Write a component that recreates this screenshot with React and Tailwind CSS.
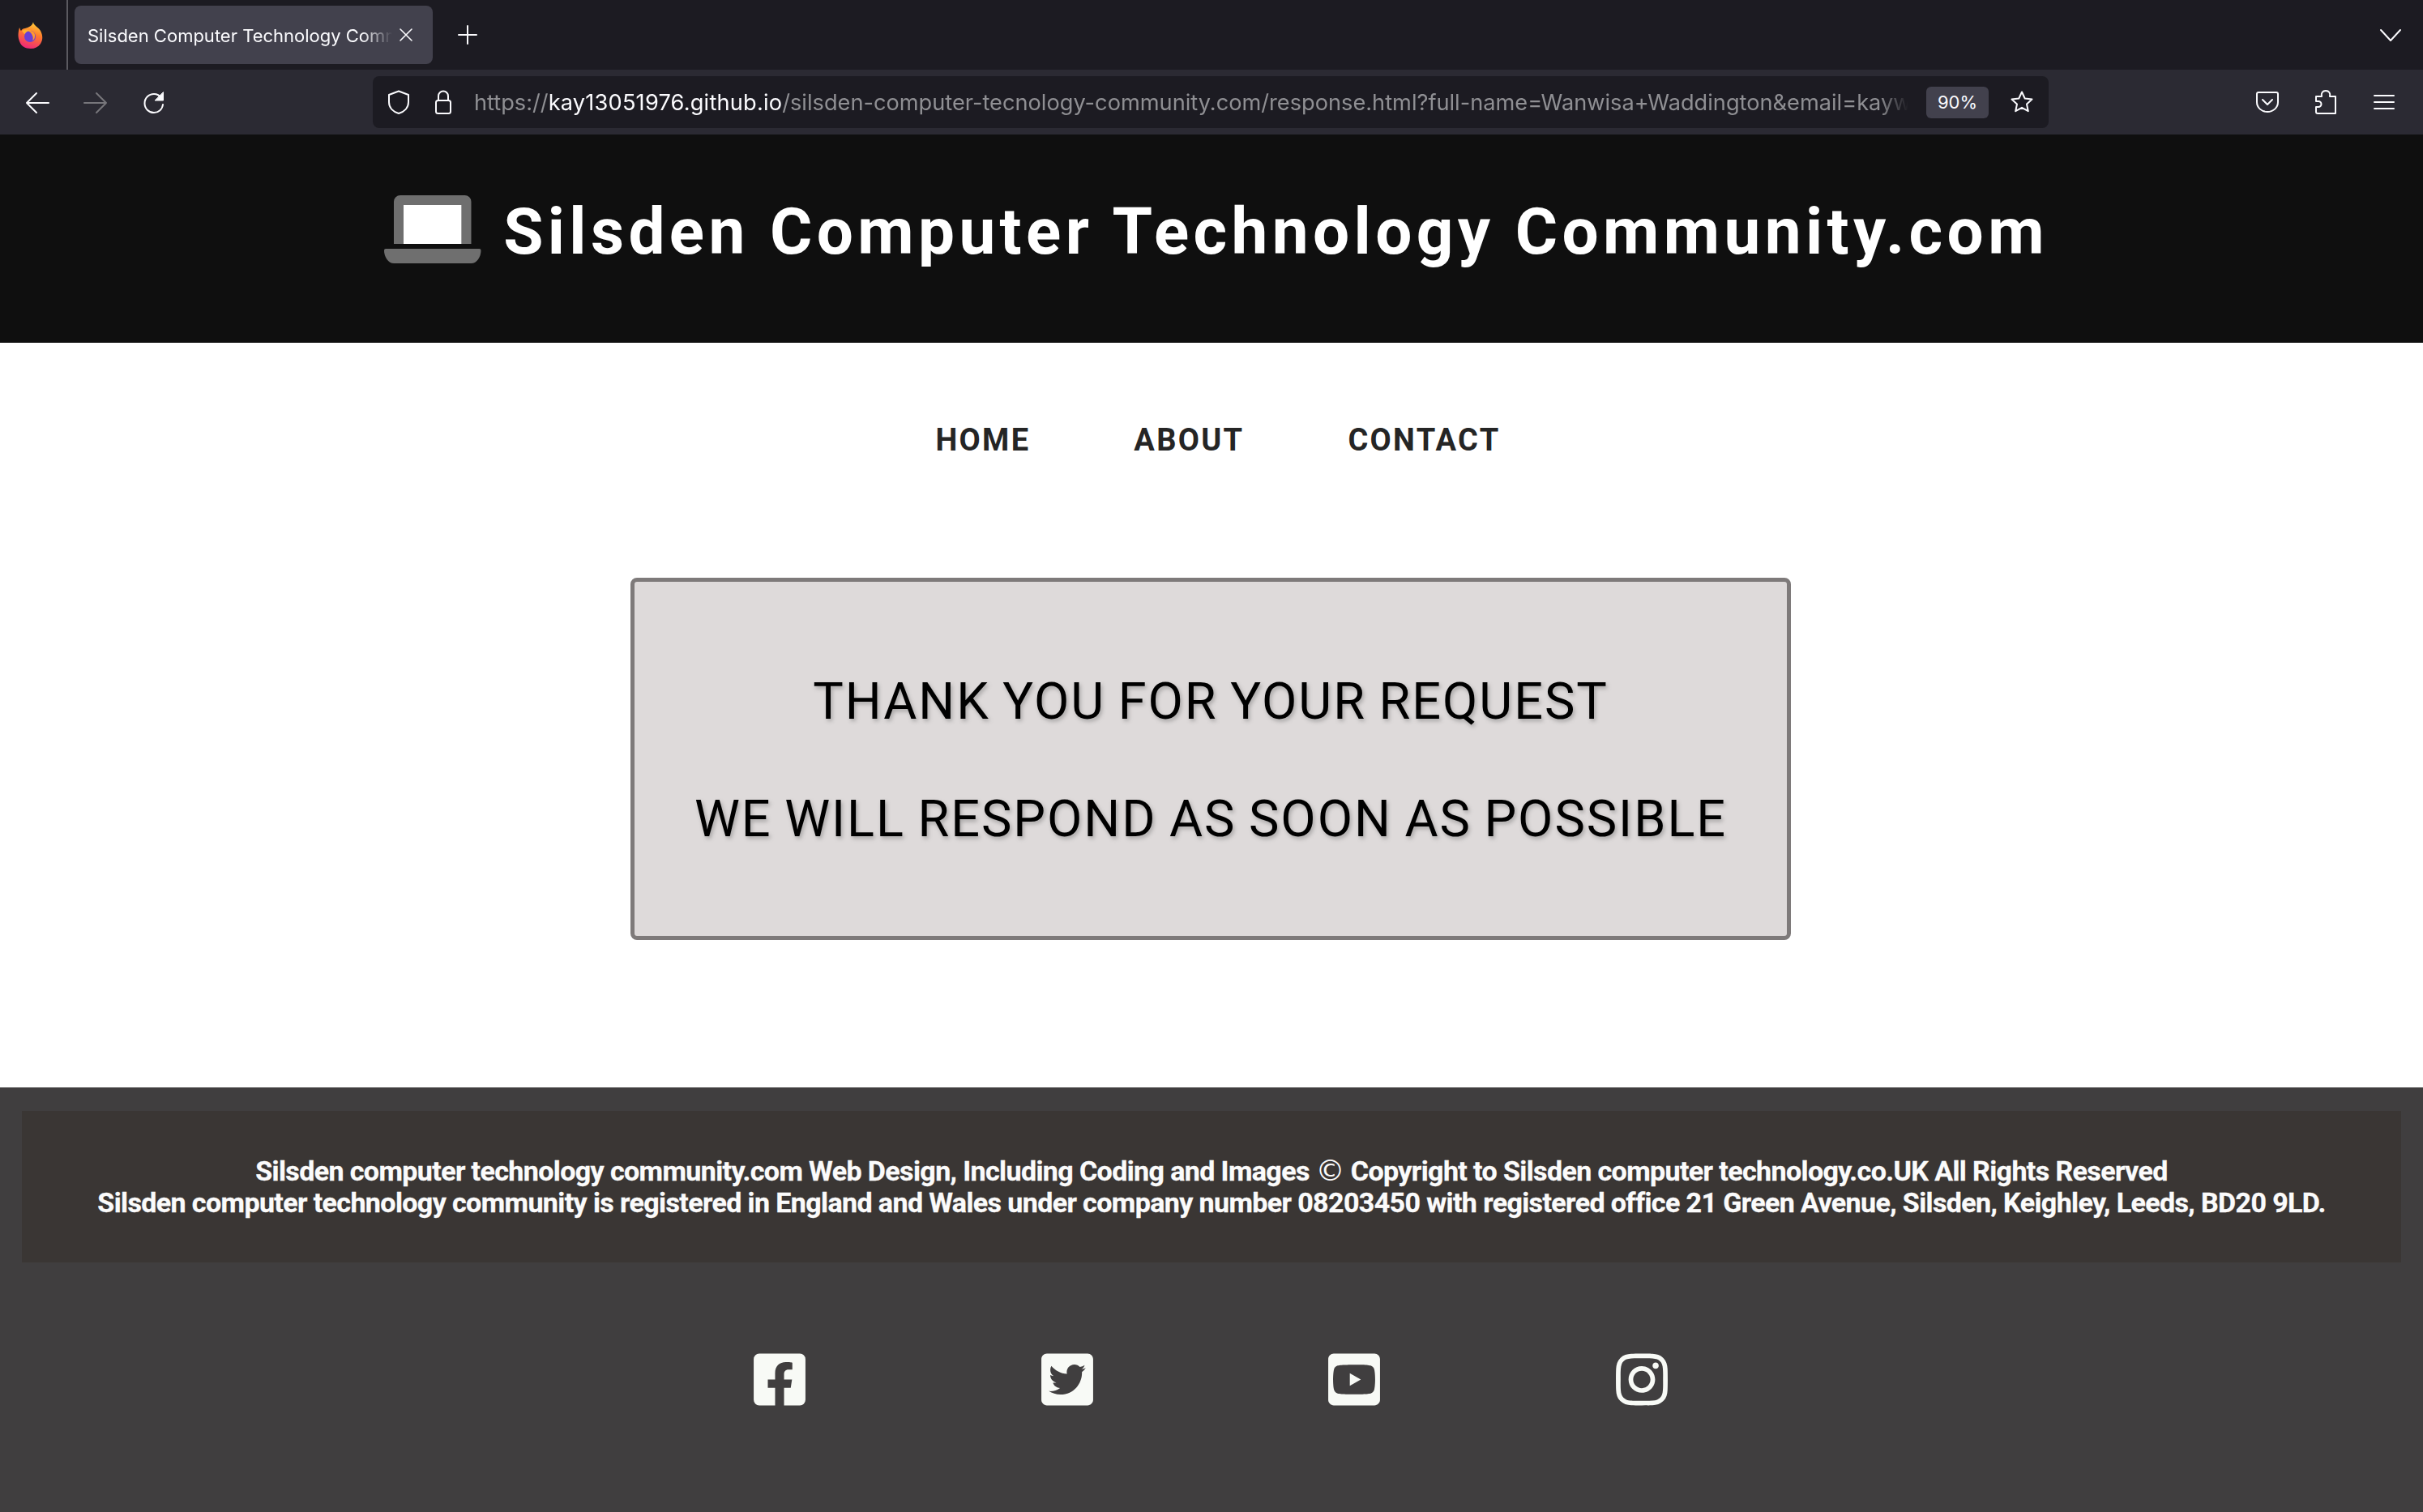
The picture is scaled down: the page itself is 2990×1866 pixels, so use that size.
import { FaFacebookSquare, FaTwitterSquare, FaYoutubeSquare, FaInstagram } from 'react-icons/fa'

const roboto = "font-['Roboto',sans-serif]"
const inter = "font-['Inter',sans-serif]"

function FirefoxLogo() {
  return (
    <svg width="31" height="33" viewBox="0 0 31 33">
      <defs>
        <linearGradient id="ffA" x1="0.7" y1="0" x2="0.4" y2="1">
          <stop offset="0" stopColor="#ffd43a" />
          <stop offset="0.45" stopColor="#ff7a2b" />
          <stop offset="1" stopColor="#f0267a" />
        </linearGradient>
      </defs>
      <path d="M19 0c0 4 6 6 9 11 3 6 3 11 0 16-3 4-7 6-12 6-7 0-12-3-14-9C0 19 0 14 2 7c1 2 1 3 2 4 1-2 3-3 5-3 4-1 9-3 10-8z" fill="url(#ffA)" />
      <path d="M5 11c3-2 8-2 11 0l-2 3-6 1z" fill="#ffb02e" />
      <circle cx="15" cy="18" r="7" fill="#6b3fd4" />
      <path d="M12 11c5-1 10 2 9 7 0 2-1 4-3 5 1-2 1-4 0-6-1-3-3-5-6-6z" fill="#ff9a2e" />
    </svg>
  )
}

function ChromeIcon({ children, dim, size = 32 }) {
  return (
    <svg
      width={size}
      height={size}
      viewBox="0 0 32 32"
      fill="none"
      stroke="currentColor"
      strokeWidth="2"
      strokeLinecap="round"
      strokeLinejoin="round"
      className={dim ? 'text-[#77767b] shrink-0' : 'text-[#fbfbfe] shrink-0'}
    >
      {children}
    </svg>
  )
}

function TabBar() {
  return (
    <div className="h-[86px] bg-[#1c1b22] flex items-center">
      <div className="w-[84px] h-full flex items-center justify-center pr-[8px] border-r-2 border-[#5b5a60]">
        <FirefoxLogo />
      </div>
      <div className="ml-[8px] w-[442px] h-[72px] bg-[#42414d] rounded-lg flex items-center pl-4 pr-[24px]">
        <span className={`${inter} flex-1 pt-[2px] overflow-hidden whitespace-nowrap text-[22px] text-[#fbfbfe] [mask-image:linear-gradient(to_right,black_90%,transparent)]`}>
          Silsden Computer Technology Community.com
        </span>
        <svg width="18" height="18" viewBox="0 0 18 18" className="ml-2 shrink-0 text-[#fbfbfe]" stroke="currentColor" strokeWidth="1.6" strokeLinecap="round">
          <path d="M2 2l14 14M16 2L2 16" />
        </svg>
      </div>
      <div className="ml-[27px]">
        <ChromeIcon>
          <path d="M16 5v22M5 16h22" />
        </ChromeIcon>
      </div>
      <div className="ml-auto mr-[24px]">
        <ChromeIcon>
          <path d="M4 10l12 13 12-13" />
        </ChromeIcon>
      </div>
    </div>
  )
}

function Toolbar() {
  return (
    <div className="h-[80px] bg-[#2b2a33] flex items-center">
      <div className="w-[460px] flex items-center pl-[30px] gap-[40px] pt-[2px]">
        <ChromeIcon>
          <path d="M30 16H3M15 4L3 16l12 12" />
        </ChromeIcon>
        <ChromeIcon dim>
          <path d="M2 16h27M17 4l12 12-12 12" />
        </ChromeIcon>
        <ChromeIcon>
          <path d="M27 18c-.6 6-5.400 10-11 10C9.500 28 4.500 23 4.500 16.500S9.500 5 16 5c4 0 7 2 9 5" />
          <path d="M27.500 3v10h-10z" fill="currentColor" strokeWidth="1" />
        </ChromeIcon>
      </div>
      <div className="w-[2068px] h-[64px] bg-[#1c1b22] rounded-lg flex items-center pl-[16px] pr-[17px]">
        <ChromeIcon>
          <path d="M16 2.500l12 4.500v9c0 7-5 12-12 14C9 28 4 23 4 16V7z" />
        </ChromeIcon>
        <span className="ml-[23px]">
          <ChromeIcon>
            <path d="M10 14V8.500a6 6 0 0112 0V14" />
            <rect x="7" y="14" width="18" height="16" rx="2.500" />
          </ChromeIcon>
        </span>
        <div className={`${inter} ml-[22px] w-[1775px] pt-[2px] overflow-hidden whitespace-nowrap text-[27.200px] text-[#8f8f93] [mask-image:linear-gradient(to_right,black_98%,transparent)]`}>
          https://<span className="text-[#fbfbfe] tracking-[0.2px]">kay13051976.github.io</span>/silsden-computer-tecnology-community.com/response.html?full-name=Wanwisa+Waddington&amp;email=kaywaddington
        </div>
        <div className={`${inter} ml-[22px] w-[77px] h-[39px] shrink-0 rounded-md bg-[#42414d] flex items-center justify-center text-[22px] text-[#fbfbfe]`}>
          90%
        </div>
        <span className="ml-[25px]">
          <ChromeIcon>
            <path d="M16 3.500l3.700 8 8.800 1-6.500 6 1.800 8.700-7.800-4.400-7.800 4.400L10 18.500l-6.500-6 8.800-1z" />
          </ChromeIcon>
        </span>
      </div>
      <div className="flex items-center pl-[254px] gap-[40px]">
        <ChromeIcon>
          <path d="M5 4h22a2 2 0 012 2v10c0 7-6 12-13 12S3 23 3 16V6a2 2 0 012-2z" />
          <path d="M10 13l6 6 6-6" />
        </ChromeIcon>
        <ChromeIcon>
          <path d="M11 9c-1-4 1-7 5-7s6 3 5 7h7v21H6a2 2 0 01-2-2v-6h3a3.500 3.500 0 000-7H4V9z" />
        </ChromeIcon>
        <ChromeIcon>
          <path d="M4 8h24M4 16h24M4 24h24" />
        </ChromeIcon>
      </div>
    </div>
  )
}

function Laptop() {
  return (
    <svg width="120" height="84" viewBox="0 0 120 84" className="shrink-0">
      <path d="M12 60V8a8 8 0 018-8h79.500a8 8 0 018 8v52H95.500V12H24v48z" fill="#6f6f6f" />
      <rect x="24" y="12" width="71.500" height="48" fill="#fff" />
      <path d="M2 66h115.500a2 2 0 012 2c0 8-5 16-12 16H12C5 84 0 76 0 68a2 2 0 012-2z" fill="#6f6f6f" />
    </svg>
  )
}

function Header() {
  return (
    <header className="h-[257px] bg-[#0f0f0f] flex items-start justify-center pt-[75px] gap-[27px] pl-[12px]">
      <Laptop />
      <h1 className={`${roboto} text-[80px] leading-[90px] font-bold tracking-[5.400px] text-white whitespace-nowrap`}>
        Silsden Computer Technology Community.com
      </h1>
    </header>
  )
}

function Nav() {
  return (
    <nav className={`${roboto} h-[290px] pt-[97px] pl-[16px] flex justify-center gap-[128px] text-[38px] leading-[46px] font-bold tracking-[2.300px] text-[#252525]`}>
      <a>HOME</a>
      <a>ABOUT</a>
      <a>CONTACT</a>
    </nav>
  )
}

function Card() {
  return (
    <main className="h-[629px] pr-[2px]">
      <div className={`${roboto} w-[1432px] h-[447px] mx-auto bg-[#dedada] border-[5px] border-[#7e7a7a] rounded-lg flex flex-col items-center pt-[113px] gap-[76px] text-[63px] leading-[69px] tracking-[1.950px] [word-spacing:-2px] text-black [text-shadow:2px_3px_5px_#a8a6a6]`}>
        <p>THANK YOU FOR YOUR REQUEST</p>
        <p>WE WILL RESPOND AS SOON AS POSSIBLE</p>
      </div>
    </main>
  )
}

function Footer() {
  const icons = [FaFacebookSquare, FaTwitterSquare, FaYoutubeSquare, FaInstagram]
  return (
    <footer className="h-[524px] bg-[#403e3f] pt-[29px]">
      <div className={`${roboto} mx-[27px] h-[187px] bg-[#3a3634] pt-[55px] text-center text-[34px] leading-[39px] font-bold tracking-[-0.610px] text-[#fbfbfb] [-webkit-text-stroke:0.3px_#fbfbfb]`}>
        <p>Silsden computer technology community.com Web Design, Including Coding and Images <span className="font-['DejaVu_Sans',sans-serif] font-normal text-[36px] leading-[30px] [-webkit-text-stroke:0]">©</span> Copyright to Silsden computer technology.co.UK All Rights Reserved</p>
        <p>Silsden computer technology community is registered in England and Wales under company number 08203450 with registered office 21 Green Avenue, Silsden, Keighley, Leeds, BD20 9LD.</p>
      </div>
      <div className="mt-[108px] flex justify-center gap-[290.5px] pr-[2px] text-[#f8faf6]">
        {icons.map((Icon, i) => (
          <Icon key={i} size={73} className="shrink-0 w-[64px]" />
        ))}
      </div>
    </footer>
  )
}

export default function App() {
  return (
    <div className="w-[2990px] h-[1866px] overflow-hidden bg-white">
      <TabBar />
      <Toolbar />
      <Header />
      <Nav />
      <Card />
      <Footer />
    </div>
  )
}
